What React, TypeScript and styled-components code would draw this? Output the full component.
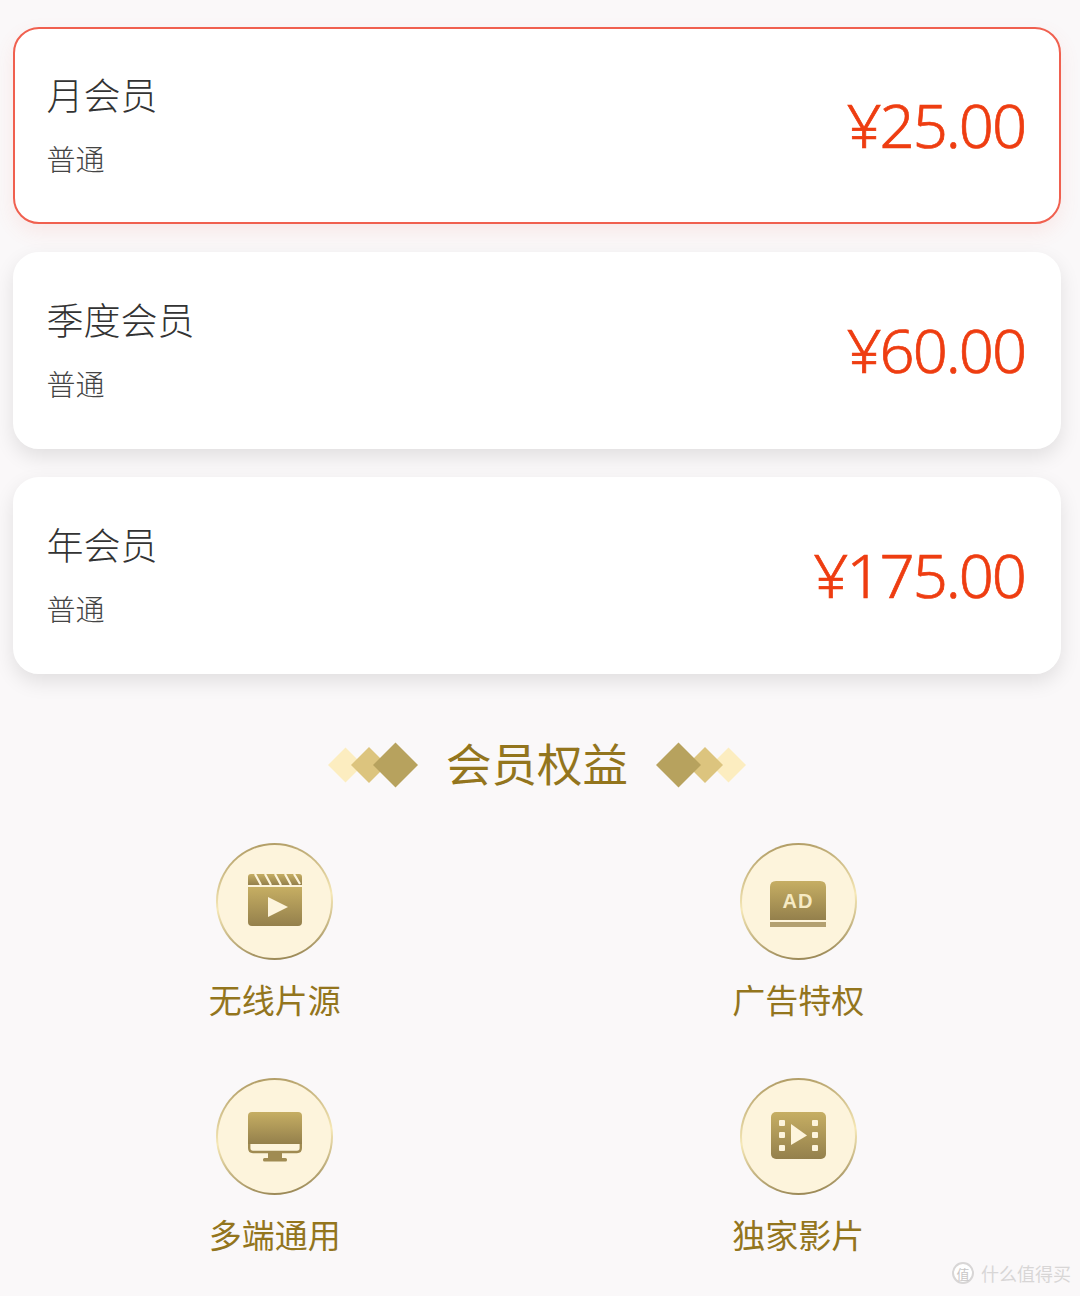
import React from "react";
import styled, { createGlobalStyle } from "styled-components";

const GlobalStyle = createGlobalStyle`
  html, body {
    margin: 0;
    padding: 0;
    background: #faf8f9;
    font-family: "Noto Sans CJK SC", "Noto Sans", sans-serif;
  }
`;

const Page = styled.div`
  position: relative;
  width: 1080px;
  height: 1296px;
  overflow: hidden;
  box-sizing: border-box;
  padding: 27px 19px 0 13px;
  background: #faf8f9;
`;

const PlanList = styled.div`
  display: flex;
  flex-direction: column;
  gap: 28px;
`;

const PlanCard = styled.div<{ $active?: boolean }>`
  box-sizing: border-box;
  height: 197px;
  display: flex;
  align-items: center;
  justify-content: space-between;
  padding: 0 34px 0 31.5px;
  background: #fff;
  border-radius: 26px;
  border: 2px solid ${(p) => (p.$active ? "#f0604f" : "#fff")};
  box-shadow: 0 8px 20px
    ${(p) => (p.$active ? "rgba(240, 96, 79, 0.1)" : "rgba(0, 0, 0, 0.1)")};
`;

const PlanInfo = styled.div`
  display: flex;
  flex-direction: column;
  gap: 26px;
  padding-bottom: 4px;
`;

const PlanName = styled.div`
  font-size: 37px;
  line-height: 42px;
  font-weight: 300;
  color: #333;
`;

const PlanTag = styled.div`
  font-size: 29px;
  line-height: 34px;
  font-weight: 300;
  color: #444;
`;

const Price = styled.div`
  font-family: "Noto Sans", "Open Sans", sans-serif;
  font-size: 61.5px;
  line-height: 70px;
  letter-spacing: -2px;
  font-weight: 300;
  -webkit-text-stroke: 0.7px #ee3d11;
  color: #ee3d11;
  padding-bottom: 3px;
`;

const SectionHead = styled.div`
  display: flex;
  align-items: center;
  justify-content: center;
  gap: 28px;
  margin-top: 58px;
  height: 66px;
`;

const SectionTitle = styled.div`
  font-size: 45.5px;
  line-height: 66px;
  color: #93751d;
  padding-bottom: 6px;
`;

const Benefits = styled.div`
  display: grid;
  grid-template-columns: 1fr 1fr;
  row-gap: 56px;
  margin: 45px 1px 0 0;
`;

const Benefit = styled.div`
  display: flex;
  flex-direction: column;
  align-items: center;
  gap: 16px;
`;

const IconDisc = styled.div<{ $lift: number; $drop: number }>`
  box-sizing: border-box;
  width: 117px;
  height: 117px;
  padding: ${(p) => p.$drop}px 0 ${(p) => p.$lift}px;
  display: flex;
  align-items: center;
  justify-content: center;
  border-radius: 50%;
  border: 2px solid transparent;
  background: linear-gradient(#fdf4dc, #fdf4dc) padding-box,
    linear-gradient(172deg, #a9945c, #f6e8b6 50%, #8f7c4a) border-box;
`;

const BenefitLabel = styled.div`
  font-size: 33px;
  line-height: 46px;
  font-weight: 400;
  color: #93751d;
`;

const Watermark = styled.div`
  position: absolute;
  right: 9px;
  bottom: 10px;
  display: flex;
  align-items: center;
  gap: 7px;
  font-size: 18px;
  color: #d8d6d6;
`;

const WatermarkBadge = styled.span`
  box-sizing: border-box;
  width: 22px;
  height: 22px;
  display: flex;
  align-items: center;
  justify-content: center;
  border-radius: 50%;
  border: 2px solid #d8d6d6;
  background: #fff;
  font-size: 13px;
  color: #c8c6c6;
`;

const Gradient = ({ id }: { id: string }) => (
  <defs>
    <linearGradient id={id} x1="0" y1="0" x2="0" y2="1">
      <stop offset="0" stopColor="#c6ae63" />
      <stop offset="1" stopColor="#94804c" />
    </linearGradient>
  </defs>
);

const Diamonds = ({ flip }: { flip?: boolean }) => (
  <svg
    width="90"
    height="46"
    viewBox="0 0 90 46"
    style={flip ? { transform: "scaleX(-1)" } : undefined}
  >
    <path d="M17.5 5.5 L35 23 L17.5 40.5 L0 23 Z" fill="#fcedc0" />
    <path d="M41 5 L59 23 L41 41 L23 23 Z" fill="#dcc47e" />
    <path d="M67.5 0.5 L90 23 L67.5 45.5 L45 23 Z" fill="#b7a25e" />
  </svg>
);

const ClapperIcon = () => (
  <svg width="54" height="52" viewBox="0 0 54 52">
    <Gradient id="clapper" />
    <path d="M3 0 H51 Q54 0 54 3 V11 H0 V3 Q0 0 3 0 Z" fill="url(#clapper)" />
    <path
      d="M7 0 L13 11 M17 0 L23 11 M27 0 L33 11 M37 0 L43 11 M46 0 L52 10"
      stroke="#fdf4dc"
      strokeWidth="2.2"
    />
    <path d="M0 13 H54 V48 Q54 52 50 52 H4 Q0 52 0 48 Z" fill="url(#clapper)" />
    <path d="M20 23 L40 33 L20 43 Z" fill="#fdf4dc" />
  </svg>
);

const AdIcon = () => (
  <svg width="56" height="46" viewBox="0 0 56 46">
    <Gradient id="ad" />
    <path d="M6 0 H50 Q56 0 56 6 V39 H0 V6 Q0 0 6 0 Z" fill="url(#ad)" />
    <rect x="0" y="41" width="56" height="5" fill="#b3a071" />
    <text
      x="28"
      y="27"
      textAnchor="middle"
      fontFamily="'Liberation Sans', sans-serif"
      fontWeight="700"
      fontSize="20"
      letterSpacing="1"
      fill="#f6eac4"
    >
      AD
    </text>
  </svg>
);

const MonitorIcon = () => (
  <svg width="54" height="50" viewBox="0 0 54 50">
    <Gradient id="monitor" />
    <path d="M4 0 H50 Q54 0 54 4 V32 H0 V4 Q0 0 4 0 Z" fill="url(#monitor)" />
    <path
      d="M1.2 32 V36 Q1.2 40 5 40 H49 Q52.8 40 52.8 36 V32"
      fill="none"
      stroke="#a08b52"
      strokeWidth="2.4"
    />
    <rect x="20" y="41" width="14" height="5" fill="#a08b52" />
    <rect x="15" y="46" width="24" height="3.5" rx="1.5" fill="#a08b52" />
  </svg>
);

const FilmIcon = () => {
  const holes = [8, 20, 33];
  return (
    <svg width="55" height="47" viewBox="0 0 55 47">
      <Gradient id="film" />
      <rect width="55" height="47" rx="5" fill="url(#film)" />
      {holes.map((y) => (
        <React.Fragment key={y}>
          <rect x="8" y={y} width="6" height="6" rx="1" fill="#fdf4dc" />
          <rect x="41" y={y} width="6" height="6" rx="1" fill="#fdf4dc" />
        </React.Fragment>
      ))}
      <path d="M20 12 L36 23.5 L20 33 Z" fill="#fdf4dc" />
    </svg>
  );
};

const plans = [
  { name: "月会员", price: "¥25.00", active: true },
  { name: "季度会员", price: "¥60.00" },
  { name: "年会员", price: "¥175.00" },
];

const benefits = [
  { label: "无线片源", icon: <ClapperIcon />, lift: 3, drop: 0 },
  { label: "广告特权", icon: <AdIcon />, lift: 0, drop: 4 },
  { label: "多端通用", icon: <MonitorIcon />, lift: 0, drop: 0 },
  { label: "独家影片", icon: <FilmIcon />, lift: 2, drop: 0 },
];

export default function App() {
  return (
    <Page>
      <GlobalStyle />
      <PlanList>
        {plans.map((plan) => (
          <PlanCard key={plan.name} $active={plan.active}>
            <PlanInfo>
              <PlanName>{plan.name}</PlanName>
              <PlanTag>普通</PlanTag>
            </PlanInfo>
            <Price>{plan.price}</Price>
          </PlanCard>
        ))}
      </PlanList>

      <SectionHead>
        <Diamonds />
        <SectionTitle>会员权益</SectionTitle>
        <Diamonds flip />
      </SectionHead>

      <Benefits>
        {benefits.map((item) => (
          <Benefit key={item.label}>
            <IconDisc $lift={item.lift} $drop={item.drop}>
              {item.icon}
            </IconDisc>
            <BenefitLabel>{item.label}</BenefitLabel>
          </Benefit>
        ))}
      </Benefits>

      <Watermark>
        <WatermarkBadge>值</WatermarkBadge>
        什么值得买
      </Watermark>
    </Page>
  );
}
